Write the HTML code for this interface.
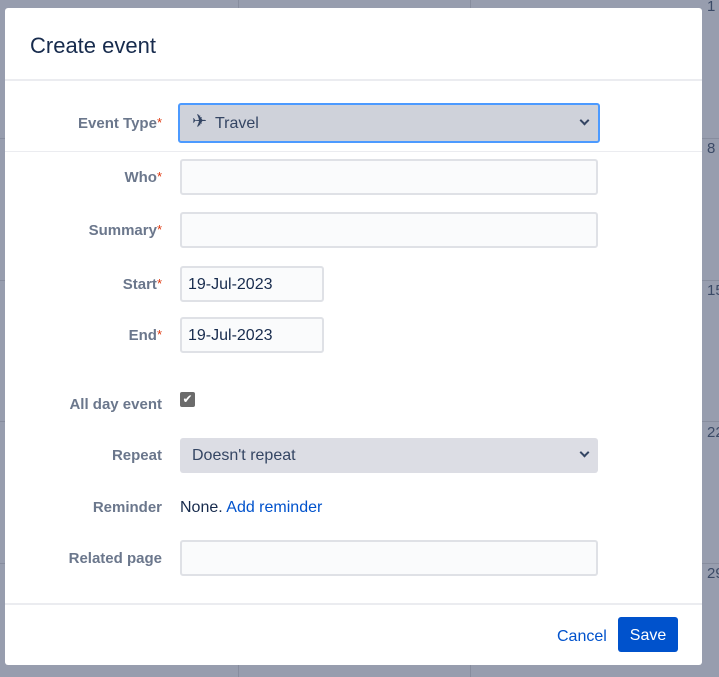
<!DOCTYPE html>
<html><head><style>
body{margin:0;width:719px;height:677px;background:#979dae;font-family:"Liberation Sans",sans-serif;position:relative;overflow:hidden}
.vl{position:absolute;top:0;bottom:0;width:1px;background:#878d9e}
.hl{position:absolute;left:0;right:0;height:1px;background:#878d9e}
.num{position:absolute;color:#3b4a66;font-size:15px}
.modal{position:absolute;left:5px;top:8px;width:697px;height:657px;background:#fff;border-radius:3px}
h1{position:absolute;left:25px;top:25px;margin:0;font-size:22px;font-weight:normal;color:#172b4d}
.sep{position:absolute;left:0;right:0;height:2px;background:#ebecf0}
.lab{position:absolute;right:540px;font-size:15px;font-weight:bold;color:#6b778c;text-align:right;white-space:nowrap}
.lab i{color:#de350b;font-style:normal;font-weight:normal;font-size:13px;vertical-align:top}
.inp{position:absolute;left:175px;box-sizing:border-box;border:2px solid #dfe1e6;background:#fafbfc;border-radius:3px;font-size:16px;color:#172b4d;padding-left:6px}
.sel{position:absolute;left:175px;width:418px;box-sizing:border-box;border-radius:3px;font-size:16px;color:#344563}
.chev{position:absolute;right:10px;top:11px;width:5px;height:5px;border-right:2px solid #344563;border-bottom:2px solid #344563;transform:rotate(45deg)}
</style></head><body>
<div class="vl" style="left:238px"></div><div class="vl" style="left:470px"></div>
<div class="hl" style="top:138px"></div><div class="hl" style="top:280px"></div><div class="hl" style="top:421px"></div><div class="hl" style="top:563px"></div>
<div class="num" style="left:707px;top:-2px">1</div><div class="num" style="left:707px;top:140px">8</div><div class="num" style="left:707px;top:282px">15</div><div class="num" style="left:707px;top:424px">22</div><div class="num" style="left:707px;top:565px">29</div>
<div class="modal">
<h1>Create event</h1>
<div class="sep" style="top:71px"></div>
<div class="lab" style="top:107px">Event Type<i>*</i></div>
<div class="sel" style="top:95px;left:173px;width:422px;height:40px;background:#cfd2da;border:2px solid #4c9aff">
<span style="position:absolute;left:12px;top:6px;font-size:18px;color:#344563">✈</span><span style="position:absolute;left:35px;top:10px">Travel</span><div class="chev" style="top:12px"></div></div>
<div class="sep" style="top:143px;height:1px"></div>
<div class="lab" style="top:161px">Who<i>*</i></div>
<div class="inp" style="top:151px;width:418px;height:36px"></div>
<div class="lab" style="top:214px">Summary<i>*</i></div>
<div class="inp" style="top:204px;width:418px;height:36px"></div>
<div class="lab" style="top:268px">Start<i>*</i></div>
<div class="inp" style="top:258px;width:144px;height:36px;line-height:34px">19-Jul-2023</div>
<div class="lab" style="top:319px">End<i>*</i></div>
<div class="inp" style="top:309px;width:144px;height:36px;line-height:34px">19-Jul-2023</div>
<div class="lab" style="top:388px">All day event</div>
<div style="position:absolute;left:175px;top:384px;width:15px;height:15px;background:#6b6b6b;border-radius:2px;color:#fff;font-size:12px;line-height:15px;text-align:center">✔</div>
<div class="lab" style="top:439px">Repeat</div>
<div class="sel" style="top:430px;height:35px;background:#dcdde4"><span style="position:absolute;left:12px;top:9px">Doesn't repeat</span><div class="chev"></div></div>
<div class="lab" style="top:491px">Reminder</div>
<div style="position:absolute;left:175px;top:491px;font-size:16px;color:#172b4d">None. <span style="color:#0052cc">Add reminder</span></div>
<div class="lab" style="top:542px">Related page</div>
<div class="inp" style="top:532px;width:418px;height:36px"></div>
<div class="sep" style="top:595px"></div>
<div style="position:absolute;left:552px;top:620px;font-size:16px;color:#0052cc">Cancel</div>
<div style="position:absolute;left:613px;top:609px;width:60px;height:35px;background:#0052cc;border-radius:3px;color:#fff;font-size:16px;line-height:37px;text-align:center">Save</div>
</div>
</body></html>
